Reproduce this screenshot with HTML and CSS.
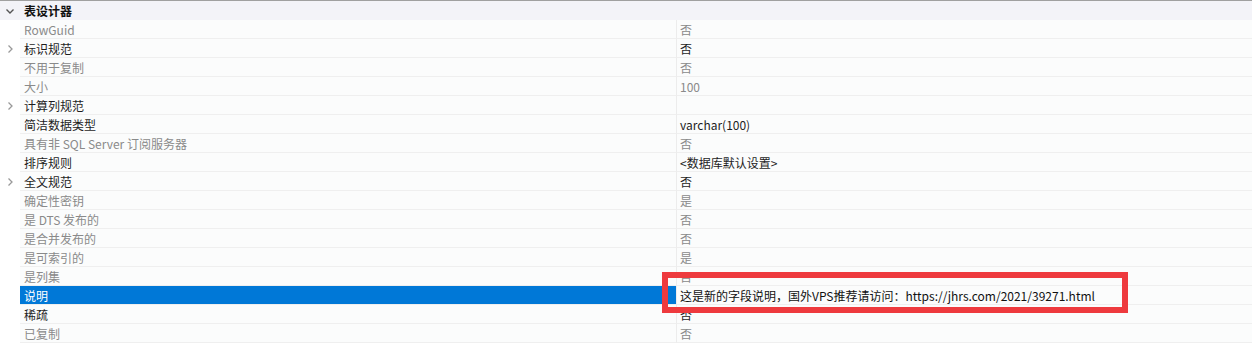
FILE: index.html
```html
<!DOCTYPE html>
<html lang="zh-CN">
<head>
  <meta charset="UTF-8" />
  <title>表设计器</title>
  <link rel="stylesheet" href="styles.css">
</head>
<body>
  <div class="grid">
    <div class="row header">
      <div class="gutter">
        <svg width="10" height="10" viewBox="0 0 10 10"><path d="M1.5 3.5 L5 7 L8.5 3.5" fill="none" stroke="#555" stroke-width="1.4"/></svg>
      </div>
      <div class="name">表设计器</div>
      <div class="value"></div>
    </div>

    <div class="row ro"><div class="gutter"></div><div class="name">RowGuid</div><div class="value">否</div></div>
    <div class="row"><div class="gutter"><svg width="8" height="10" viewBox="0 0 8 10"><path d="M2.5 1.5 L6 5 L2.5 8.5" fill="none" stroke="#999" stroke-width="1.3"/></svg></div><div class="name">标识规范</div><div class="value">否</div></div>
    <div class="row ro"><div class="gutter"></div><div class="name">不用于复制</div><div class="value">否</div></div>
    <div class="row ro"><div class="gutter"></div><div class="name">大小</div><div class="value">100</div></div>
    <div class="row"><div class="gutter"><svg width="8" height="10" viewBox="0 0 8 10"><path d="M2.5 1.5 L6 5 L2.5 8.5" fill="none" stroke="#999" stroke-width="1.3"/></svg></div><div class="name">计算列规范</div><div class="value"></div></div>
    <div class="row"><div class="gutter"></div><div class="name">简洁数据类型</div><div class="value">varchar(100)</div></div>
    <div class="row ro"><div class="gutter"></div><div class="name">具有非 SQL Server 订阅服务器</div><div class="value">否</div></div>
    <div class="row"><div class="gutter"></div><div class="name">排序规则</div><div class="value">&lt;数据库默认设置&gt;</div></div>
    <div class="row"><div class="gutter"><svg width="8" height="10" viewBox="0 0 8 10"><path d="M2.5 1.5 L6 5 L2.5 8.5" fill="none" stroke="#999" stroke-width="1.3"/></svg></div><div class="name">全文规范</div><div class="value">否</div></div>
    <div class="row ro"><div class="gutter"></div><div class="name">确定性密钥</div><div class="value">是</div></div>
    <div class="row ro"><div class="gutter"></div><div class="name">是 DTS 发布的</div><div class="value">否</div></div>
    <div class="row ro"><div class="gutter"></div><div class="name">是合并发布的</div><div class="value">否</div></div>
    <div class="row ro"><div class="gutter"></div><div class="name">是可索引的</div><div class="value">是</div></div>
    <div class="row ro"><div class="gutter"></div><div class="name">是列集</div><div class="value">否</div></div>
    <div class="row selected"><div class="gutter"></div><div class="name">说明</div><div class="value">这是新的字段说明，国外VPS推荐请访问：https://jhrs.com/2021/39271.html</div></div>
    <div class="row"><div class="gutter"></div><div class="name">稀疏</div><div class="value">否</div></div>
    <div class="row ro"><div class="gutter"></div><div class="name">已复制</div><div class="value">否</div></div>
  </div>

  <div class="highlight-box"></div>
</body>
</html>
```

FILE: styles.css
```css
body {
  margin: 0;
  background: #fff;
  font-family: "Noto Sans CJK SC", "Microsoft YaHei", sans-serif;
  font-size: 12px;
  color: #1e1e1e;
  position: relative;
  height: 349px;
  overflow: hidden;
}
.grid {
  border-top: 1px solid #a0a0a0;
}
.row {
  display: grid;
  grid-template-columns: 20px 657px 1fr;
  height: 19px;
  line-height: 18px;
}
.gutter {
  display: flex;
  align-items: center;
  justify-content: center;
  background: #fff;
}
.name,
.value {
  background: #fbfcfc;
  border-bottom: 1px solid #efefef;
  white-space: nowrap;
  overflow: hidden;
  padding-top: 1px;
}
.name {
  padding-left: 4px;
  border-right: 1px solid #ececec;
}
.value {
  padding-left: 3px;
}
.row.ro .name,
.row.ro .value {
  color: #8a8a8a;
}
.header .name,
.header .value,
.header .gutter {
  background: #f3f3f8;
  border: none;
}
.header .name {
  font-weight: bold;
  color: #111;
}
.row.selected .name {
  background: #0078d7;
  color: #fff;
}
.row.selected .value {
  color: #111;
}
.highlight-box {
  position: absolute;
  left: 662px;
  top: 272px;
  width: 454px;
  height: 29px;
  border: 6px solid #ee3a3e;
}
```
